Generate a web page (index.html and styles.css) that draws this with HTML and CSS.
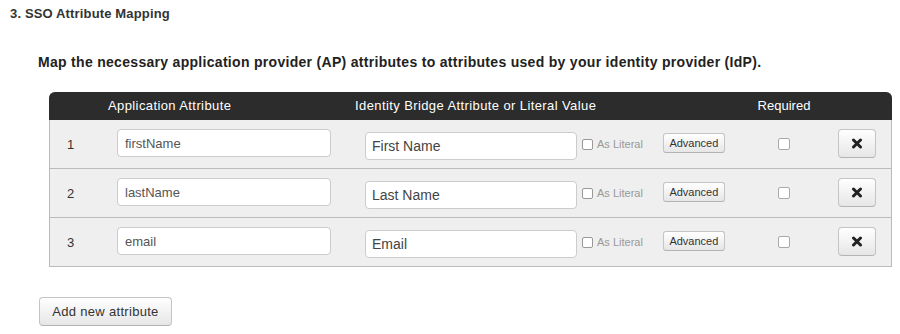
FILE: index.html
```html
<!DOCTYPE html>
<html>
<head>
<meta charset="utf-8">
<link rel="stylesheet" href="styles.css">
</head>
<body>
<div class="page">
  <h3 class="title">3. SSO Attribute Mapping</h3>
  <div class="section">
    <p class="lead">Map the necessary application provider (AP) attributes to attributes used by your identity provider (IdP).</p>
    <div class="map-table">
      <div class="row head">
        <div></div>
        <div class="h-left">Application Attribute</div>
        <div class="h-left">Identity Bridge Attribute or Literal Value</div>
        <div class="h-center">Required</div>
        <div></div>
      </div>
      <div class="row">
        <div class="num">1</div>
        <div class="cell"><input class="ap-input" type="text" value="firstName"></div>
        <div class="cell">
          <input class="idp-input" type="text" value="First Name">
          <label class="literal"><input class="chk" type="checkbox">As Literal</label>
          <button class="btn-adv" type="button">Advanced</button>
        </div>
        <div class="cell center"><input class="chk req" type="checkbox"></div>
        <div class="cell"><button class="btn-del" type="button"><svg width="12" height="11" viewBox="0 0 12 11"><path d="M2.5 2 L9.5 9 M9.5 2 L2.5 9" stroke="#222" stroke-width="3" stroke-linecap="round"/></svg></button></div>
      </div>
      <div class="row">
        <div class="num">2</div>
        <div class="cell"><input class="ap-input" type="text" value="lastName"></div>
        <div class="cell">
          <input class="idp-input" type="text" value="Last Name">
          <label class="literal"><input class="chk" type="checkbox">As Literal</label>
          <button class="btn-adv" type="button">Advanced</button>
        </div>
        <div class="cell center"><input class="chk req" type="checkbox"></div>
        <div class="cell"><button class="btn-del" type="button"><svg width="12" height="11" viewBox="0 0 12 11"><path d="M2.5 2 L9.5 9 M9.5 2 L2.5 9" stroke="#222" stroke-width="3" stroke-linecap="round"/></svg></button></div>
      </div>
      <div class="row">
        <div class="num">3</div>
        <div class="cell"><input class="ap-input" type="text" value="email"></div>
        <div class="cell">
          <input class="idp-input" type="text" value="Email">
          <label class="literal"><input class="chk" type="checkbox">As Literal</label>
          <button class="btn-adv" type="button">Advanced</button>
        </div>
        <div class="cell center"><input class="chk req" type="checkbox"></div>
        <div class="cell"><button class="btn-del" type="button"><svg width="12" height="11" viewBox="0 0 12 11"><path d="M2.5 2 L9.5 9 M9.5 2 L2.5 9" stroke="#222" stroke-width="3" stroke-linecap="round"/></svg></button></div>
      </div>
    </div>
  </div>
  <button class="btn-add" type="button">Add new attribute</button>
</div>
</body>
</html>
```

FILE: styles.css
```css
* { box-sizing: border-box; }
html, body { margin: 0; padding: 0; background: #fff; }
body {
  font-family: "Liberation Sans", Arial, sans-serif;
  color: #333;
  width: 900px;
  height: 334px;
  overflow: hidden;
}
.page { padding: 6px 0 0 10px; }
.title {
  margin: 0;
  font-size: 13px;
  line-height: 16px;
  font-weight: bold;
  letter-spacing: 0.15px;
  color: #333;
}
.section { padding-left: 28px; }
.lead {
  margin: 31px 0 21px 0;
  font-size: 14px;
  line-height: 18px;
  font-weight: bold;
  letter-spacing: 0.3px;
  color: #222;
}
.map-table {
  margin-left: 11px;
  width: 843px;
  border: 1px solid #bbb;
  border-top: none;
  border-radius: 6px 6px 0 0;
  background: #efefef;
}
.row {
  display: grid;
  grid-template-columns: 58px 247px 385px 88px 63px;
  align-items: center;
  height: 49px;
  border-bottom: 1px solid #bbb;
  font-size: 13px;
}
.row:last-child { border-bottom: none; height: 48px; }
.row.head {
  height: 28px;
  background: #2c2c2c;
  color: #fff;
  border-bottom: none;
  border-radius: 6px 6px 0 0;
  margin: 0 -1px;
  padding: 0 1px;
  line-height: 28px;
  letter-spacing: 0.4px;
}
.h-left { text-align: left; }
.h-center { text-align: center; letter-spacing: 0; }
.num { padding-left: 17px; color: #333; }
.cell { display: flex; align-items: center; }
.cell.center { justify-content: center; }
.ap-input, .idp-input {
  font-family: "Liberation Sans", Arial, sans-serif;
  height: 28px;
  border: 1px solid #ccc;
  border-radius: 4px;
  background: #fff;
  color: #555;
  outline: none;
}
.ap-input {
  width: 214px;
  margin: 0 0 0 9px;
  padding: 0 7px;
  font-size: 13px;
  position: relative;
  top: -1px;
}
.idp-input {
  width: 212px;
  margin: 0 0 0 10px;
  padding: 0 6px;
  font-size: 14px;
  color: #444;
  position: relative;
  top: 2px;
}
.chk {
  -webkit-appearance: none;
  appearance: none;
  width: 11px;
  height: 11px;
  margin: 0;
  border: 1px solid #999;
  border-radius: 2px;
  background: #fff;
}
.literal {
  display: flex;
  align-items: center;
  margin-left: 5px;
  font-size: 11px;
  color: #999;
}
.literal .chk { margin-right: 4px; }
.req { width: 12px; height: 12px; border-color: #aaa; }
.btn-adv {
  margin-left: 20px;
  height: 20px;
  width: 62px;
  padding: 0;
  font-family: "Liberation Sans", Arial, sans-serif;
  font-size: 11px;
  color: #333;
  border: 1px solid #c4c4c4;
  border-bottom-color: #b3b3b3;
  border-radius: 3px;
  background: linear-gradient(#ffffff, #e6e6e6);
  position: relative;
  top: -1px;
}
.btn-del {
  margin-left: 10px;
  width: 38px;
  height: 29px;
  padding: 0;
  display: flex;
  align-items: center;
  justify-content: center;
  border: 1px solid #c4c4c4;
  border-bottom-color: #b3b3b3;
  border-radius: 4px;
  background: linear-gradient(#ffffff, #e6e6e6);
  position: relative;
  top: -1px;
}
.btn-add {
  margin: 30px 0 0 29px;
  height: 29px;
  width: 133px;
  padding: 0;
  font-family: "Liberation Sans", Arial, sans-serif;
  font-size: 13px;
  letter-spacing: 0.3px;
  color: #333;
  border: 1px solid #c4c4c4;
  border-bottom-color: #b3b3b3;
  border-radius: 4px;
  background: linear-gradient(#ffffff, #e6e6e6);
}
```
